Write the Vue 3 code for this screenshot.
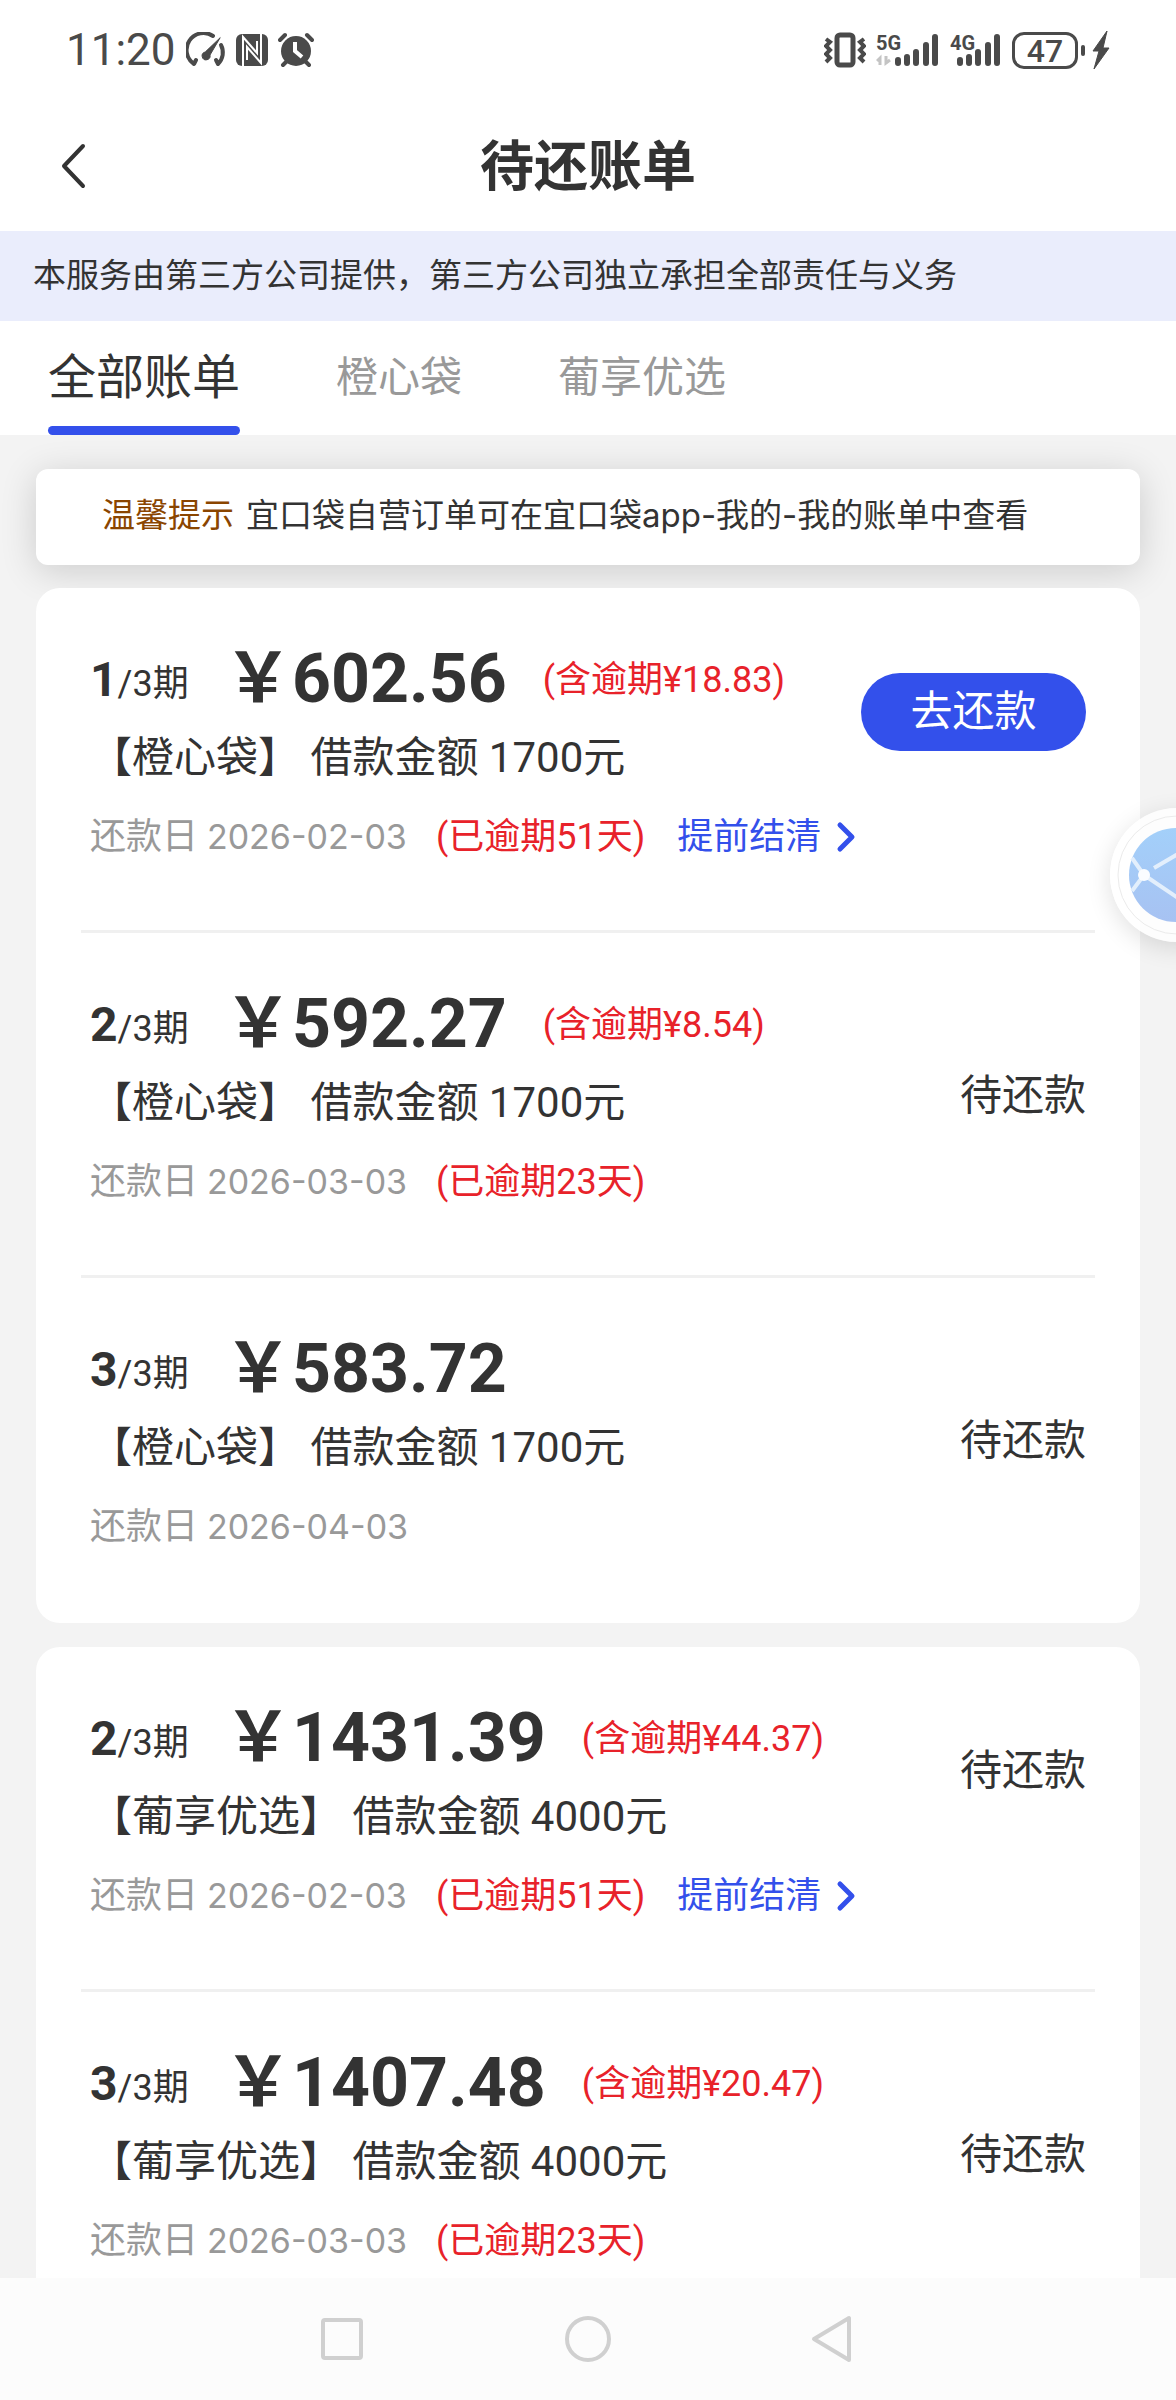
<script setup>
import { ref, computed } from 'vue';


const tabs = ['全部账单', '橙心袋', '葡享优选'];

const activeTab = ref('全部账单');

const bills = [
    {
        product: '橙心袋',
        loan: 1700,
        total: 3,
        periods: [
            { no: 1, amount: '602.56', fee: '18.83', date: '2026-02-03', days: 51, settle: true, payable: true },
            { no: 2, amount: '592.27', fee: '8.54', date: '2026-03-03', days: 23 },
            { no: 3, amount: '583.72', date: '2026-04-03' }
        ]
    },
    {
        product: '葡享优选',
        loan: 4000,
        total: 3,
        periods: [
            { no: 2, amount: '1431.39', fee: '44.37', date: '2026-02-03', days: 51, settle: true },
            { no: 3, amount: '1407.48', fee: '20.47', date: '2026-03-03', days: 23 }
        ]
    }
];

const shownBills = computed(() => {
    if (activeTab.value == tabs[0]) return bills;
    return bills.filter((bill) => bill.product == activeTab.value);
});

</script>




<template>

    <div class="page">

        <div class="status-bar">

            <div class="status-left">
                <span class="time">11:20</span>

                <svg width="40" height="36" viewBox="0 0 40 36" fill="none" stroke="#4a4a4a" stroke-width="4" stroke-linecap="round" stroke-linejoin="round">
                    <path d="M27 4A16 16 0 0 0 8 32L10 28" />
                    <path d="M35 13A16 16 0 0 1 32 32L30 28" />
                    <path d="M34 6L24 23A4 4 0 1 1 19 20Z" fill="#4a4a4a" stroke-width="1" />
                </svg>

                <svg width="32" height="32" viewBox="0 0 32 32">
                    <rect width="32" height="32" rx="6" fill="#4a4a4a" />
                    <path d="M7 32V3L21 19V7M25 0V29L11 13V26" fill="none" stroke="#fff" stroke-width="2" />
                </svg>

                <svg width="36" height="36" viewBox="0 0 36 36" fill="none" stroke="#4a4a4a" stroke-linecap="round">
                    <circle cx="18" cy="19" r="15" fill="#4a4a4a" stroke="none" />
                    <path d="M2 8L7 3M34 8L29 3M5 33L9 29M31 33L27 29" stroke-width="4" />
                    <path d="M17 10V19L24 25" stroke="#fff" stroke-width="4" stroke-linecap="butt" />
                </svg>
            </div>

            <div class="status-right">
                <svg width="42" height="36" viewBox="0 0 42 36" fill="none" stroke="#4a4a4a">
                    <rect x="13" y="3" width="16" height="30" rx="3" stroke-width="5" />
                    <path d="M2 7L6 10L2 14L6 18L2 22L6 26L2 30M40 7L36 10L40 14L36 18L40 22L36 26L40 30" stroke-width="4" />
                </svg>

                <svg class="signal" width="64" height="36" viewBox="0 0 64 36">
                    <text x="0" y="18" class="net">5G</text>
                    <path d="M4 33V26L1 29M10 24V31L14 28" fill="none" stroke="#c4c4c4" stroke-width="3" />
                    <path d="M22 28V31M31 25V31M40 20V31M50 13V31M59 5V31" stroke="#4a4a4a" stroke-width="6" stroke-linecap="round" />
                </svg>

                <svg class="signal" width="52" height="36" viewBox="0 0 52 36">
                    <text x="0" y="18" class="net">4G</text>
                    <path d="M10 28V31M19 25V31M28 20V31M38 13V31M47 5V31" stroke="#4a4a4a" stroke-width="6" stroke-linecap="round" />
                </svg>

                <div class="battery"><span>47</span></div>

                <svg width="18" height="38" viewBox="0 0 18 38">
                    <path d="M15 0L1 20L7 20L2 38L17 17L11 17Z" fill="#4a4a4a" stroke="#4a4a4a" stroke-width="1" />
                </svg>
            </div>

        </div>

        <header class="header">
            <button class="back" aria-label="返回">
                <svg width="28" height="46" viewBox="0 0 28 46" fill="none" stroke="#333" stroke-width="4" stroke-linecap="round" stroke-linejoin="round">
                    <path d="M24 3L5 23L24 43" />
                </svg>
            </button>
            <h1 class="title">待还账单</h1>
        </header>

        <p class="notice">本服务由第三方公司提供，第三方公司独立承担全部责任与义务</p>

        <nav class="tabs">
            <button v-for="tab in tabs" :key="tab" class="tab" :class="{ active: tab == activeTab }" @click="activeTab = tab">{{ tab }}</button>
        </nav>

        <main class="content">

            <p class="tip"><span class="tip-label">温馨提示</span><span>宜口袋自营订单可在宜口袋app-我的-我的账单中查看</span></p>

            <section v-for="bill in shownBills" :key="bill.product" class="card">

                <article v-for="item in bill.periods" :key="item.no" class="item" :class="{ first: item.settle }">

                    <div class="info">
                        <div class="line">
                            <span class="period"><b>{{ item.no }}</b>/{{ bill.total }}期</span>
                            <strong class="amount">￥{{ item.amount }}</strong>
                            <span v-if="item.fee" class="red fee">(含逾期¥{{ item.fee }})</span>
                        </div>

                        <div class="line loan">【{{ bill.product }}】 借款金额 {{ bill.loan }}元</div>

                        <div class="line due">
                            <span class="due-date">还款日 <time>{{ item.date }}</time></span>
                            <span v-if="item.days" class="red">(已逾期{{ item.days }}天)</span>
                            <a v-if="item.settle" class="settle" href="#">
                                提前结清
                                <svg class="arrow" width="20" height="32" viewBox="0 0 20 32" fill="none" stroke="#3350eb" stroke-width="5" stroke-linecap="round" stroke-linejoin="round">
                                    <path d="M4 4L16 16L4 28" />
                                </svg>
                            </a>
                        </div>
                    </div>

                    <button v-if="item.payable" class="pay">去还款</button>
                    <span v-else class="state">待还款</span>

                </article>

            </section>

        </main>

        <footer class="nav-bar">
            <svg width="46" height="50" viewBox="0 0 46 50"><rect x="4" y="6" width="38" height="38" rx="2" /></svg>
            <svg width="46" height="50" viewBox="0 0 46 50"><circle cx="23" cy="25" r="21" /></svg>
            <svg width="46" height="50" viewBox="0 0 46 50"><path d="M38 4V46L3 25Z" /></svg>
        </footer>

        <button class="float" aria-label="客服">
            <svg width="134" height="134" viewBox="0 0 134 134" fill="none">
                <defs>
                    <linearGradient id="ball" x1="0" y1="0" x2="0" y2="1">
                        <stop offset="0" stop-color="#a3d0fa" />
                        <stop offset="1" stop-color="#a7c2f2" />
                    </linearGradient>
                </defs>
                <circle cx="67" cy="67" r="59" stroke="#ebebeb" stroke-width="1" />
                <circle cx="66" cy="67" r="47" fill="url(#ball)" />
                <path d="M22 50L34 67L22 83M34 67L80 98M44 60L80 39" stroke="#e3effc" stroke-width="4" />
                <circle cx="34" cy="67" r="6" fill="#fafcff" />
            </svg>
        </button>

    </div>

</template>




<style>

body {
    margin: 0;
}

</style>

<style scoped>

.page {
    position: relative;

    height: 100vh;

    display: flex;
    flex-direction: column;

    overflow: hidden;

    background: #f3f3f3;
    color: #333;
    font-family: Roboto, "Noto Sans CJK SC", sans-serif;
    font-size: 36px;
}

button {
    padding: 0;
    border: 0;

    background: none;
    color: inherit;
    font: inherit;
}

svg {
    display: block;
    flex: none;
}




.status-bar {
    height: 100px;
    padding: 0 66px;

    display: flex;
    flex: none;
    align-items: center;
    justify-content: space-between;

    background: #fff;
    color: #4a4a4a;
}

.status-left,
.status-right {
    display: flex;
    align-items: center;
    gap: 10px;
}

.time {
    font-size: 44px;
}

.net {
    fill: #4a4a4a;
    font-size: 20px;
    font-weight: 700;
}

.battery {
    position: relative;

    box-sizing: border-box;
    width: 66px;
    height: 37px;
    margin-right: 4px;
    border: 3px solid #4a4a4a;
    border-radius: 12px;

    font-size: 32px;
    font-weight: 500;
    line-height: 32px;
    text-align: center;
}

.battery::after {
    content: "";
    position: absolute;
    top: 10px;
    right: -10px;

    width: 4px;
    height: 11px;
    border-radius: 2px;

    background: #4a4a4a;
}




.header {
    position: relative;

    height: 131px;

    display: flex;
    flex: none;
    align-items: center;
    justify-content: center;

    background: #fff;
}

.back {
    position: absolute;
    left: 59px;
}

.title {
    margin: 0;
    padding-top: 4px;

    font-size: 54px;
    font-weight: 700;
    line-height: 72px;
}

.notice {
    margin: 0;
    padding: 0 33px;

    flex: none;

    background: #eaedfc;
    font-size: 33px;
    line-height: 90px;
}




.tabs {
    height: 114px;
    padding: 0 48px;

    display: flex;
    flex: none;
    gap: 96px;

    background: #fff;
}

.tab {
    position: relative;

    color: #999;
    font-size: 42px;
    line-height: 114px;
}

.tab.active {
    color: #333;
    font-size: 48px;
}

.tab.active::after {
    content: "";
    position: absolute;
    bottom: 0;
    left: 0;

    width: 100%;
    height: 9px;
    border-radius: 5px;

    background: #3350eb;
}




.content {
    min-height: 0;
    padding: 34px 36px 0;

    flex: 1;

    overflow: hidden;
}

.tip {
    margin: 0 0 23px;
    padding: 0 66px 4px;
    border-radius: 12px;

    display: flex;
    gap: 12px;

    background: #fff;
    box-shadow: 0 6px 36px rgba(0, 0, 0, 0.16);
    font-family: Inter, "Noto Sans CJK SC", sans-serif;
    font-size: 33px;
    line-height: 92px;
}

.tip-label {
    color: #8a4500;
}




.card {
    position: relative;

    margin-bottom: 24px;
    padding: 0 45px;
    border-radius: 24px;

    background: #fff;
}

.item {
    box-sizing: border-box;
    height: 345px;
    padding: 52px 9px 0;
    border-bottom: 3px solid #f0f0f0;

    display: flex;
    justify-content: space-between;
}

.item:last-child {
    border-bottom-color: transparent;
}

.line {
    height: 78px;

    display: flex;
    align-items: center;

    white-space: pre;
}

.period {
    width: 134px;
}

.period b {
    font-size: 48px;
}

.amount {
    margin-right: 36px;

    font-size: 68px;
    line-height: 78px;
}

.red {
    color: #e8222a;
}

.fee {
    padding-bottom: 6px;
}

.loan {
    height: 70px;

    font-size: 42px;
}

.due {
    height: 90px;
}

.due-date {
    width: 346px;

    color: #999;
}

.due-date time {
    font-family: Inter, sans-serif;
    font-size: 34px;
}

.settle {
    margin-left: 32px;

    display: flex;
    align-items: center;
    gap: 15px;

    color: #3350eb;
    text-decoration: none;
    white-space: nowrap;
}

.arrow {
    padding-top: 8px;
}

.state,
.pay {
    height: 78px;
    margin-top: 72px;

    flex: none;

    font-size: 42px;
    line-height: 78px;
}

.first .state,
.first .pay {
    margin-top: 33px;
}

.pay {
    width: 225px;
    border-radius: 39px;

    background: #3350eb;
    color: #fff;
}




.nav-bar {
    height: 122px;

    display: flex;
    flex: none;
    align-items: center;
    justify-content: center;
    gap: 200px;

    background: #fcfcfc;
}

.nav-bar svg {
    fill: none;
    stroke: #d0d0d0;
    stroke-width: 4;
    stroke-linejoin: round;
}

.float {
    position: absolute;
    top: 808px;
    right: -68px;

    border-radius: 50%;

    background: rgba(255, 255, 255, 0.8);
    box-shadow: 0 6px 24px rgba(0, 0, 0, 0.12);
}

</style>
